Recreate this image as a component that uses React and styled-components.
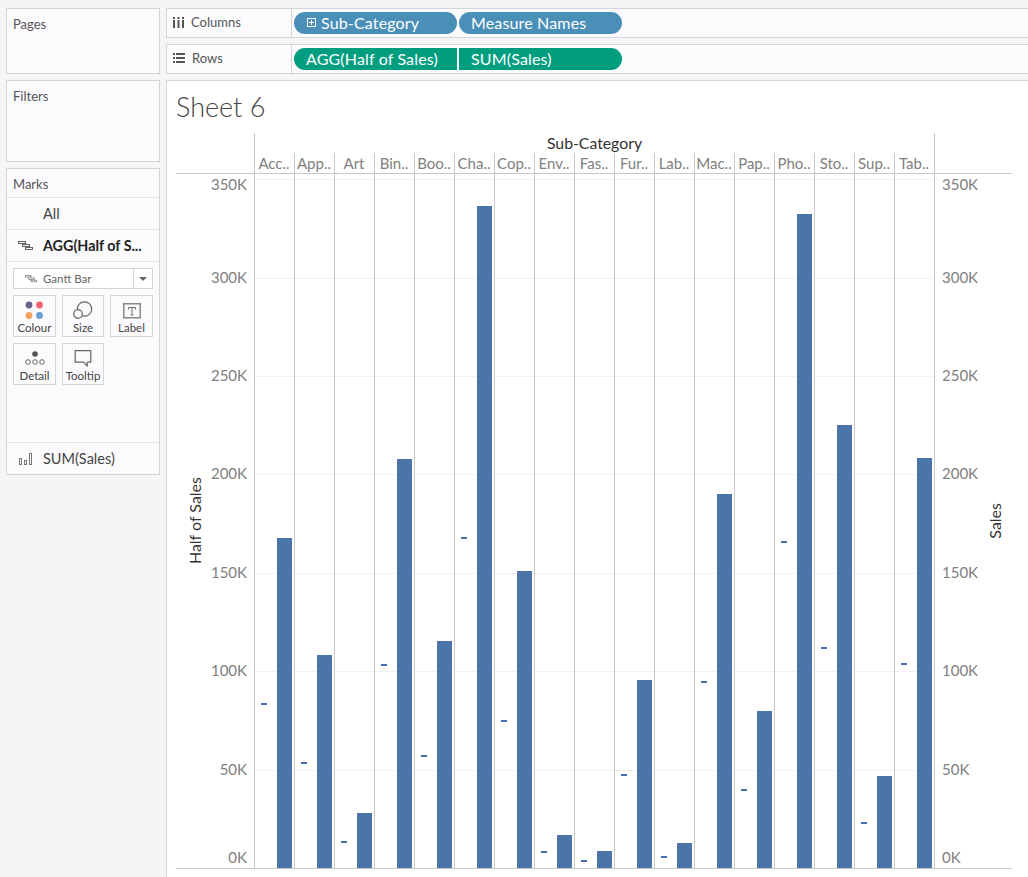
import React from "react";
import styled, { createGlobalStyle } from "styled-components";

const GlobalStyle = createGlobalStyle`
  html, body {
    margin: 0;
    height: 100%;
    overflow: hidden;
    background: #f5f4f7;
    font-family: "Lato", "Open Sans", sans-serif;
  }
`;

const PX_PER_K = 1.968;
const PLOT_HEIGHT = 694;
const COL_WIDTH = 40;

const subCategories = [
  { label: "Acc..", sales: 167.7 },
  { label: "App..", sales: 108.2 },
  { label: "Art", sales: 27.9 },
  { label: "Bin..", sales: 207.8 },
  { label: "Boo..", sales: 115.3 },
  { label: "Cha..", sales: 336.4 },
  { label: "Cop..", sales: 150.9 },
  { label: "Env..", sales: 16.8 },
  { label: "Fas..", sales: 8.6 },
  { label: "Fur..", sales: 95.5 },
  { label: "Lab..", sales: 12.7 },
  { label: "Mac..", sales: 190 },
  { label: "Pap..", sales: 79.8 },
  { label: "Pho..", sales: 332.3 },
  { label: "Sto..", sales: 225.1 },
  { label: "Sup..", sales: 46.7 },
  { label: "Tab..", sales: 208.3 },
];

const ticks = [350, 300, 250, 200, 150, 100, 50, 0];

const Page = styled.div`
  display: grid;
  grid-template-columns: 154px 1fr;
  column-gap: 6px;
  height: 877px;
  padding: 8px 0 0 6px;
  box-sizing: border-box;
  overflow: hidden;
`;

const Sidebar = styled.aside`
  display: flex;
  flex-direction: column;
  gap: 6px;
`;

const Panel = styled.section`
  height: ${(p) => p.$height}px;
  box-sizing: border-box;
  background: #fbfafd;
  border: 1px solid #d5d4d7;
  display: flex;
  flex-direction: column;
`;

const PanelTitle = styled.div`
  font-size: 13px;
  color: #555;
  padding: 7px 6px 0;
`;

const MarksHeader = styled.div`
  height: 29px;
  box-sizing: border-box;
  padding: 7px 6px 0;
  font-size: 13px;
  color: #555;
  border-bottom: 1px solid #e2e1e4;
`;

const MarksRow = styled.div`
  display: flex;
  align-items: center;
  height: ${(p) => (p.$last ? 31 : 32)}px;
  box-sizing: border-box;
  border-bottom: ${(p) => (p.$last ? "none" : "1px solid #e2e1e4")};
  font-size: ${(p) => (p.$bold ? 14.3 : 14.5)}px;
  font-weight: ${(p) => (p.$bold ? 700 : 400)};
  color: ${(p) => (p.$bold ? "#222" : "#444")};
  white-space: nowrap;
`;

const RowIcon = styled.span`
  display: flex;
  justify-content: center;
  align-items: center;
  width: 36px;
  flex: none;
`;

const MarkTypeSelect = styled.div`
  display: flex;
  align-items: stretch;
  height: 21px;
  margin: 6px 6px 0;
  box-sizing: border-box;
  border: 1px solid #d5d4d7;
  background: #fff;
  font-size: 11.5px;
  color: #666;
`;

const MarkTypeValue = styled.div`
  flex: 1;
  display: flex;
  align-items: center;
  gap: 6px;
  padding-left: 11px;
`;

const MarkTypeArrow = styled.div`
  width: 18px;
  border-left: 1px solid #d5d4d7;
  display: flex;
  align-items: center;
  justify-content: center;

  &::after {
    content: "";
    border-left: 4px solid transparent;
    border-right: 4px solid transparent;
    border-top: 4px solid #666;
  }
`;

const MarkCards = styled.div`
  display: grid;
  grid-template-columns: 43px 42px 43px;
  grid-auto-rows: 42px;
  justify-content: space-between;
  row-gap: 6px;
  margin: 6px 6px 0;
  flex: 1;
`;

const MarkCard = styled.div`
  box-sizing: border-box;
  border: 1px solid #d5d4d7;
  display: flex;
  flex-direction: column;
  align-items: center;
  font-size: 11.5px;
  color: #444;
  height: 42px;
  padding-top: 5px;
  white-space: nowrap;

  svg {
    height: 19px;
    flex: none;
  }
  span {
    margin-top: 1px;
  }
`;

const MarksFooter = styled.div`
  border-top: 1px solid #e2e1e4;
`;

const Workspace = styled.main`
  display: flex;
  flex-direction: column;
  gap: 6px;
  min-width: 0;
`;

const Shelf = styled.div`
  display: flex;
  align-items: stretch;
  height: 30px;
  box-sizing: border-box;
  background: #fbfafd;
  border: 1px solid #d5d4d7;
  border-right: none;
`;

const ShelfLabel = styled.div`
  display: flex;
  align-items: center;
  gap: 7px;
  width: 125px;
  padding: 0 0 2px 6px;
  box-sizing: border-box;
  border-right: 1px solid #d5d4d7;
  font-size: 13px;
  color: #555;
`;

const Pills = styled.div`
  display: flex;
  align-items: center;
  gap: 2px;
  padding-left: 2px;
`;

const Pill = styled.div`
  display: flex;
  align-items: center;
  gap: 5px;
  width: 163px;
  height: 22px;
  box-sizing: border-box;
  padding: 0 0 1px ${(p) => (p.$icon ? 13 : 12)}px;
  color: #fff;
  font-size: 16px;
  letter-spacing: 0.15px;
  white-space: nowrap;
  background: ${(p) => (p.$green ? "#009e7f" : "#4a8fb7")};
  border-radius: ${(p) =>
    p.$side === "left" ? "11px 0 0 11px" : p.$side === "right" ? "0 11px 11px 0" : "11px"};
`;

const SheetCard = styled.div`
  flex: 1;
  background: #fff;
  border: 1px solid #d5d4d7;
  border-right: none;
  border-bottom: none;
  padding-left: 9px;
`;

const SheetTitle = styled.h1`
  margin: 0;
  padding-top: 8px;
  height: 44px;
  font-size: 27px;
  line-height: 36px;
  font-weight: 300;
  color: #444;
`;

const ChartGrid = styled.div`
  display: grid;
  grid-template-columns: 78px 680px 78px;
  grid-template-rows: 41px 695px;
  width: 836px;
`;

const Corner = styled.div`
  border-bottom: 1px solid #c9c9c9;
`;

const Header = styled.div`
  display: flex;
  flex-direction: column;
  border-bottom: 1px solid #c9c9c9;
`;

const HeaderTitle = styled.div`
  height: 20px;
  line-height: 20px;
  text-align: center;
  font-size: 15.8px;
  color: #333;
  border-left: 1px solid #c9c9c9;
  border-right: 1px solid #c9c9c9;
  margin-right: -1px;
`;

const HeaderCells = styled.div`
  display: grid;
  grid-template-columns: repeat(17, 40px);
  height: 20px;
`;

const HeaderCell = styled.div`
  box-sizing: border-box;
  border-left: 1px solid #c9c9c9;
  padding-right: 1px;
  text-align: center;
  font-size: 15px;
  line-height: 20px;
  color: #808080;
  white-space: nowrap;
  overflow: hidden;

  &:last-child {
    border-right: 1px solid #c9c9c9;
    width: 41px;
  }
`;

const Axis = styled.div`
  display: flex;
  flex-direction: ${(p) => (p.$right ? "row-reverse" : "row")};
  border-bottom: 1px solid #c9c9c9;
  height: 695px;
  box-sizing: border-box;
`;

const AxisTitle = styled.div`
  flex: none;
  align-self: center;
  writing-mode: vertical-rl;
  transform: rotate(180deg);
  font-size: 16px;
  color: #333;
  margin: ${(p) => (p.$right ? "0 8px 0 0" : "0 0 0 9px")};
`;

const AxisTicks = styled.div`
  flex: 1;
  display: flex;
  flex-direction: column;
`;

const AxisTick = styled.div`
  display: flex;
  justify-content: ${(p) => (p.$right ? "flex-start" : "flex-end")};
  align-items: ${(p) =>
    p.$edge === "top" ? "flex-start" : p.$edge === "bottom" ? "flex-end" : "center"};
  height: ${(p) => (p.$edge === "top" ? 53.4 : p.$edge === "bottom" ? 50.2 : 98.4)}px;
  padding: ${(p) => (p.$right ? "0 0 0 8px" : "0 7px 0 0")};
  padding-bottom: ${(p) => (p.$edge === "bottom" ? 1 : 0)}px;
  box-sizing: border-box;
  font-size: 15px;
  line-height: 20px;
  color: #808080;
`;

const Plot = styled.svg`
  display: block;
  overflow: visible;
`;

const ColumnsIcon = () => (
  <svg width="11" height="11" viewBox="0 0 11 11" fill="#555">
    <rect x="0" y="0" width="2" height="2" />
    <rect x="0" y="3" width="2" height="8" />
    <rect x="4.5" y="0" width="2" height="2" />
    <rect x="4.5" y="3" width="2" height="8" />
    <rect x="9" y="0" width="2" height="2" />
    <rect x="9" y="3" width="2" height="8" />
  </svg>
);

const RowsIcon = () => (
  <svg width="12" height="10" viewBox="0 0 12 10" fill="#555">
    <rect x="0" y="0" width="2" height="2" />
    <rect x="3" y="0" width="9" height="2" />
    <rect x="0" y="4" width="2" height="2" />
    <rect x="3" y="4" width="9" height="2" />
    <rect x="0" y="8" width="2" height="2" />
    <rect x="3" y="8" width="9" height="2" />
  </svg>
);

const PlusBoxIcon = () => (
  <svg width="9" height="9" viewBox="0 0 9 9" fill="none" stroke="#fff" strokeWidth="1">
    <rect x="0.5" y="0.5" width="8" height="8" />
    <path d="M4.5 2v5M2 4.5h5" />
  </svg>
);

const GanttIcon = ({ color = "#777", scale = 1 }) => (
  <svg width={15 * scale} height={10 * scale} viewBox="0 0 15 10" fill="#f4f4f4" stroke={color}>
    <rect x="0.5" y="0.5" width="7" height="2" />
    <rect x="4.5" y="3.5" width="7" height="2" />
    <rect x="7.5" y="6.5" width="7" height="2" />
  </svg>
);

const BarsIcon = () => (
  <svg width="13" height="12" viewBox="0 0 13 12" fill="none" stroke="#777">
    <rect x="0.5" y="5.5" width="2" height="6" />
    <rect x="5.5" y="7.5" width="2" height="4" />
    <rect x="10.5" y="0.5" width="2" height="11" />
  </svg>
);

const ColourIcon = () => (
  <svg width="19" viewBox="0 0 19 19">
    <circle cx="4" cy="4" r="3.4" fill="#6b6186" />
    <circle cx="14.5" cy="4" r="3.4" fill="#f0636d" />
    <circle cx="4" cy="14.5" r="3.4" fill="#f5a15f" />
    <circle cx="14.5" cy="14.5" r="3.4" fill="#6a9fd0" />
  </svg>
);

const SizeIcon = () => (
  <svg width="20" viewBox="0 0 20 19" fill="none" stroke="#666" strokeWidth="1.2">
    <circle cx="11.5" cy="8" r="7.2" />
    <circle cx="5" cy="13" r="4.3" fill="#fbfafd" />
  </svg>
);

const LabelIcon = () => (
  <svg width="18" viewBox="0 0 18 19" fill="none">
    <rect x="0.75" y="2.75" width="16.5" height="14" stroke="#888" strokeWidth="1.5" />
    <path d="M5.5 6.5h7v2M9 6.5v7.5M7.5 14h3M5.5 6.5v2" stroke="#777" strokeWidth="1.1" />
  </svg>
);

const DetailIcon = () => (
  <svg width="20" viewBox="0 0 20 19" fill="none" stroke="#666">
    <circle cx="10" cy="5" r="2.8" fill="#555" stroke="none" />
    <circle cx="3" cy="13" r="2.3" />
    <circle cx="10" cy="13" r="2.3" />
    <circle cx="17" cy="13" r="2.3" />
  </svg>
);

const TooltipIcon = () => (
  <svg width="18" viewBox="0 0 18 19" fill="none" stroke="#666" strokeWidth="1.2">
    <path d="M1.2 1.6h15.6v11.6h-3.6v4l-3.6-4H1.2z" strokeLinejoin="round" />
  </svg>
);

const ChartPlot = () => (
  <Plot width="680" height={PLOT_HEIGHT + 1} viewBox={`0 0 680 ${PLOT_HEIGHT + 1}`}>
    {ticks.slice(0, -1).map((t) => {
      const y = Math.round(PLOT_HEIGHT - t * PX_PER_K) + 0.5;
      return <line key={t} x1="1" x2="680" y1={y} y2={y} stroke="#f2f2f2" />;
    })}
    {subCategories.map((c, i) => (
      <line
        key={c.label}
        x1={i * COL_WIDTH + 0.5}
        x2={i * COL_WIDTH + 0.5}
        y1="0"
        y2={PLOT_HEIGHT}
        stroke="#c9c9c9"
      />
    ))}
    <line x1="680.5" x2="680.5" y1="0" y2={PLOT_HEIGHT} stroke="#c9c9c9" />
    <line x1="0" x2="680" y1={PLOT_HEIGHT + 0.5} y2={PLOT_HEIGHT + 0.5} stroke="#c9c9c9" />
    {subCategories.map((c, i) => {
      const h = Math.round(c.sales * PX_PER_K);
      const half = Math.round((c.sales / 2) * PX_PER_K);
      return (
        <g key={c.label} fill="#4b75a9">
          <rect x={i * COL_WIDTH + 23} y={PLOT_HEIGHT - h} width="15" height={h} />
          <rect x={i * COL_WIDTH + 7} y={PLOT_HEIGHT - half} width="6" height="2" fill="#4a6fb0" />
        </g>
      );
    })}
  </Plot>
);

const AxisColumn = ({ right, title }) => (
  <Axis $right={right}>
    <AxisTitle $right={right}>{title}</AxisTitle>
    <AxisTicks>
      {ticks.map((t, i) => (
        <AxisTick
          key={t}
          $right={right}
          $edge={i === 0 ? "top" : i === ticks.length - 1 ? "bottom" : undefined}
        >
          {t}K
        </AxisTick>
      ))}
    </AxisTicks>
  </Axis>
);

export default function App() {
  return (
    <>
      <GlobalStyle />
      <Page>
        <Sidebar>
          <Panel $height={66}>
            <PanelTitle>Pages</PanelTitle>
          </Panel>
          <Panel $height={82}>
            <PanelTitle>Filters</PanelTitle>
          </Panel>
          <Panel $height={307}>
            <MarksHeader>Marks</MarksHeader>
            <MarksRow>
              <RowIcon />
              All
            </MarksRow>
            <MarksRow $bold>
              <RowIcon>
                <GanttIcon color="#666" />
              </RowIcon>
              AGG(Half of S...
            </MarksRow>
            <MarkTypeSelect>
              <MarkTypeValue>
                <GanttIcon color="#888" scale={0.8} />
                Gantt Bar
              </MarkTypeValue>
              <MarkTypeArrow />
            </MarkTypeSelect>
            <MarkCards>
              <MarkCard>
                <ColourIcon />
                <span>Colour</span>
              </MarkCard>
              <MarkCard>
                <SizeIcon />
                <span>Size</span>
              </MarkCard>
              <MarkCard>
                <LabelIcon />
                <span>Label</span>
              </MarkCard>
              <MarkCard>
                <DetailIcon />
                <span>Detail</span>
              </MarkCard>
              <MarkCard>
                <TooltipIcon />
                <span>Tooltip</span>
              </MarkCard>
            </MarkCards>
            <MarksFooter>
              <MarksRow $last>
                <RowIcon>
                  <BarsIcon />
                </RowIcon>
                SUM(Sales)
              </MarksRow>
            </MarksFooter>
          </Panel>
        </Sidebar>
        <Workspace>
          <Shelf>
            <ShelfLabel>
              <ColumnsIcon />
              Columns
            </ShelfLabel>
            <Pills>
              <Pill $icon>
                <PlusBoxIcon />
                Sub-Category
              </Pill>
              <Pill>Measure Names</Pill>
            </Pills>
          </Shelf>
          <Shelf>
            <ShelfLabel>
              <RowsIcon />
              Rows
            </ShelfLabel>
            <Pills>
              <Pill $green $side="left">AGG(Half of Sales)</Pill>
              <Pill $green $side="right">SUM(Sales)</Pill>
            </Pills>
          </Shelf>
          <SheetCard>
            <SheetTitle>Sheet 6</SheetTitle>
            <ChartGrid>
              <Corner />
              <Header>
                <HeaderTitle>Sub-Category</HeaderTitle>
                <HeaderCells>
                  {subCategories.map((c) => (
                    <HeaderCell key={c.label}>{c.label}</HeaderCell>
                  ))}
                </HeaderCells>
              </Header>
              <Corner />
              <AxisColumn title="Half of Sales" />
              <ChartPlot />
              <AxisColumn right title="Sales" />
            </ChartGrid>
          </SheetCard>
        </Workspace>
      </Page>
    </>
  );
}
